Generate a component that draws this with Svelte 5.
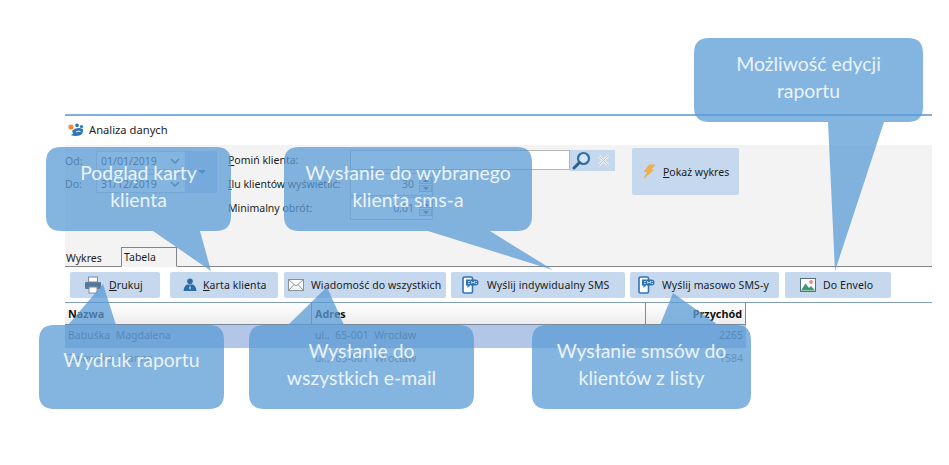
<script>
	const buttons = [
		{ id: 'print', key: 'D', rest: 'rukuj', width: 90, gap: 7, pad: 14, before: 0 },
		{ id: 'person', key: 'K', rest: 'arta klienta', width: 108, gap: 6, pad: 13, before: 10 },
		{ id: 'mail', key: '', rest: 'Wiadomość do wszystkich', width: 162, gap: 7, pad: 4, before: 6 },
		{ id: 'sms', key: '', rest: 'Wyślij indywidualny SMS', width: 174, gap: 8, pad: 11, before: 5 },
		{ id: 'sms', key: '', rest: 'Wyślij masowo SMS-y', width: 149, gap: 7, pad: 8, before: 5 },
		{ id: 'image', key: '', rest: 'Do Envelo', width: 106, gap: 7, pad: 15, before: 6 }
	];

	const rows = [
		{ name: 'Babuśka  Magdalena', addr: 'ul.,  65-001  Wrocław', sum: '2265', selected: true },
		{ name: 'Zalewska  Joanna', addr: 'ul.,  65-001  Wrocław', sum: '1584', selected: false }
	];

	// shape = rounded box + tail, drawn as one path so the overlap stays flat
	function bubble(x, y, w, h, t) {
		const r = 15;
		const base = t.top
			? `L${t.a} ${y} L${t.x} ${t.y} L${t.b} ${y} `
			: '';
		const foot = t.top
			? ''
			: `L${t.b} ${y + h} L${t.x} ${t.y} L${t.a} ${y + h} `;
		return (
			`M${x + r} ${y} ${base}L${x + w - r} ${y} Q${x + w} ${y} ${x + w} ${y + r} ` +
			`L${x + w} ${y + h - r} Q${x + w} ${y + h} ${x + w - r} ${y + h} ${foot}` +
			`L${x + r} ${y + h} Q${x} ${y + h} ${x} ${y + h - r} L${x} ${y + r} Q${x} ${y} ${x + r} ${y} Z`
		);
	}

	const callouts = [
		{ x: 46, y: 147, w: 185, h: 84, lines: ['Podgląd karty', 'klienta'], tail: { a: 153, b: 200, x: 211, y: 271 } },
		{ x: 284, y: 147, w: 248, h: 84, lines: ['Wysłanie do wybranego', 'klienta sms-a'], tail: { a: 428, b: 490, x: 553, y: 270 } },
		{ x: 694, y: 38, w: 229, h: 84, lines: ['Możliwość edycji', 'raportu'], tail: { a: 828, b: 884, x: 835, y: 271 } },
		{ x: 39, y: 325, w: 185, h: 84, lines: ['Wydruk raportu'], tail: { top: true, a: 68, b: 116, x: 103, y: 284 } },
		{ x: 249, y: 325, w: 225, h: 84, lines: ['Wysłanie do', 'wszystkich e-mail'], tail: { top: true, a: 288, b: 344, x: 327, y: 287 } },
		{ x: 532, y: 325, w: 219, h: 84, lines: ['Wysłanie smsów do', 'klientów z listy'], tail: { top: true, a: 660, b: 718, x: 673, y: 293 } }
	];
</script>

{#snippet icon(id)}
	{#if id === 'print'}
		<svg width="18" height="18" viewBox="0 0 18 18" aria-hidden="true">
			<rect x="4.5" y="1" width="9" height="5" fill="#fff" stroke="#7d8a96" />
			<rect x="1" y="6" width="16" height="7" rx="1" fill="#66798c" />
			<rect x="1" y="8" width="16" height="1.5" fill="#3f78ad" />
			<rect x="5" y="11" width="8" height="6" fill="#fff" stroke="#7d8a96" />
		</svg>
	{:else if id === 'person'}
		<svg width="14" height="14" viewBox="0 0 14 14" aria-hidden="true">
			<circle cx="7" cy="3.2" r="2.8" fill="#2a6ca8" />
			<path d="M4.4 6.4 L9.6 6.4 Q13 7.6 13.5 13 L0.5 13 Q1 7.6 4.4 6.4 Z" fill="#2a6ca8" />
			<path d="M7 7 L7.8 10 L7 12 L6.2 10 Z" fill="#cfe0f0" />
		</svg>
	{:else if id === 'mail'}
		<svg width="16" height="12" viewBox="0 0 16 12" aria-hidden="true">
			<rect x="0.5" y="0.5" width="15" height="11" fill="#fff" stroke="#8a8f95" />
			<path d="M1 1 L8 7 L15 1 M1 11 L6 5.5 M15 11 L10 5.5" fill="none" stroke="#8a8f95" />
		</svg>
	{:else if id === 'sms'}
		<svg width="17" height="18" viewBox="0 0 17 18" aria-hidden="true">
			<rect x="1" y="1" width="9.5" height="16" rx="1.5" fill="#fff" stroke="#2f74b5" stroke-width="1.6" />
			<path d="M4 3.5 H13.5 Q16.5 3.5 16.5 6.5 Q16.5 9.5 13.5 9.5 H8 L5.5 12 V9.5 H4 Z" fill="#2f74b5" />
			<path d="M6 5.5 H8 M6 7.5 H8 M9.5 7.5 V5.5 L11 7 L12.5 5.5 V7.5 M13.5 5.5 H15 M13.5 7.5 H15" stroke="#fff" stroke-width="0.7" fill="none" />
		</svg>
	{:else}
		<svg width="16" height="14" viewBox="0 0 16 14" aria-hidden="true">
			<rect x="0.5" y="0.5" width="15" height="13" fill="#fff" stroke="#55707f" />
			<circle cx="11" cy="4" r="2" fill="#ee8f7c" />
			<path d="M1 12.5 L5.5 5.5 L9 10 L11 8 L15 12.5 Z" fill="#3c9a6f" />
		</svg>
	{/if}
{/snippet}

{#snippet chevron()}
	<svg class="chev" width="10" height="6" viewBox="0 0 10 6" aria-hidden="true">
		<path d="M1 1 L5 5 L9 1" fill="none" stroke="#5f6a75" stroke-width="1.6" />
	</svg>
{/snippet}

{#snippet spin()}
	<span class="spin"><i class="up"></i><i class="down"></i></span>
{/snippet}

<main class="page">
	<div class="window">
		<header class="title">
			<svg width="16" height="14" viewBox="0 0 16 14" aria-hidden="true">
				<circle cx="3" cy="4" r="2.6" fill="#ef8a3c" />
				<circle cx="9" cy="2.4" r="1.8" fill="#2f74b5" />
				<circle cx="13.5" cy="3.6" r="1.6" fill="#2f74b5" />
				<path d="M4 8 Q8 3.5 15 6 Q15.5 11 11.5 12.5 Q7 13.5 2.5 12 Q6.5 11 4 8 Z" fill="#2f74b5" />
				<path d="M8 9 Q10 7.5 12.5 8.5" fill="none" stroke="#fff" />
			</svg>
			<span>Analiza danych</span>
		</header>

		<section class="panel">
			<div class="filters">
				<div class="dates">
					<div class="date-rows">
						<label class="date-row"><span>Od:</span><span class="date">01/01/2019{@render chevron()}</span></label>
						<label class="date-row"><span>Do:</span><span class="date">31/12/2019{@render chevron()}</span></label>
					</div>
					<span class="range-btn"><i class="caret"></i></span>
				</div>

				<div class="fields">
					<div class="field">
						<span class="lab"><u>P</u>omiń klienta:</span>
						<span class="text-input"></span>
						<span class="search">
							<svg width="19" height="19" viewBox="0 0 19 19" aria-hidden="true">
								<circle cx="11.5" cy="7.5" r="5.5" fill="#fff" fill-opacity="0.3" stroke="#2f6ea8" stroke-width="2.2" />
								<path d="M7.5 11.5 L2 17" stroke="#2f5f8f" stroke-width="3" stroke-linecap="round" />
							</svg>
							<svg width="13" height="13" viewBox="0 0 13 13" aria-hidden="true">
								<path d="M2 2 L11 11 M11 2 L2 11" stroke="#eef1f3" stroke-width="2.6" />
								<path d="M2 2 L11 11 M11 2 L2 11" stroke="#aab4bc" stroke-width="0.8" />
							</svg>
						</span>
					</div>
					<div class="field">
						<span class="lab"><u>I</u>lu klientów wyświetlić:</span>
						<span class="num">30{@render spin()}</span>
					</div>
					<div class="field">
						<span class="lab">Minimalny obrót:</span>
						<span class="num">0,01{@render spin()}</span>
					</div>
				</div>

				<div class="show">
					<svg width="14" height="16" viewBox="0 0 14 16" aria-hidden="true">
						<path d="M7 0.5 H13.5 L9.5 5.5 H12.5 L1 15.5 L5 8 H1.5 Z" fill="#eeb04d" />
					</svg>
					<span><u>P</u>okaż wykres</span>
				</div>
			</div>

			<div class="tabs">
				<span class="tab">Wykres</span>
				<span class="tab active">Tabela</span>
			</div>
		</section>

		<nav class="toolbar">
			{#each buttons as b}
				<div class="tool" style="width: {b.width}px; gap: {b.gap}px; padding-left: {b.pad}px; margin-left: {b.before}px">
					{@render icon(b.id)}
					<span>{#if b.key}<u>{b.key}</u>{/if}{b.rest}</span>
				</div>
			{/each}
		</nav>

		<div class="table">
			<div class="row head">
				<span>Nazwa</span>
				<span>Adres</span>
				<span class="sum">Przychód</span>
			</div>
			{#each rows as r}
				<div class="row" class:selected={r.selected}>
					<span>{r.name}</span>
					<span>{r.addr}</span>
					<span class="sum">{r.sum}</span>
				</div>
			{/each}
		</div>
	</div>

	<svg class="shapes" width="949" height="465" aria-hidden="true">
		{#each callouts as c}
			<path d={bubble(c.x, c.y, c.w, c.h, c.tail)} />
		{/each}
	</svg>
	{#each callouts as c}
		<div class="callout" class:single={c.lines.length === 1} style="left: {c.x}px; top: {c.y}px; width: {c.w}px; height: {c.h}px">
			{#each c.lines as line}
				<span>{line}</span>
			{/each}
		</div>
	{/each}
</main>

<style>
	:global(body) {
		margin: 0;
		background: #fff;
	}

	.page {
		position: relative;
		width: 949px;
		height: 465px;
		overflow: hidden;
		font-family: 'Noto Sans', 'Open Sans', sans-serif;
		font-size: 10.5px;
		color: #1c1c1c;
	}

	.window {
		position: absolute;
		left: 65px;
		top: 114px;
		width: 867px;
		border-top: 2px solid #7fb0de;
	}

	.title {
		display: flex;
		align-items: center;
		gap: 5px;
		box-sizing: border-box;
		height: 29px;
		padding: 0 0 2px 3px;
		font-size: 11.2px;
	}

	.panel {
		display: flex;
		flex-direction: column;
		height: 122px;
		background: #f3f3f3;
		border-bottom: 1px solid #858585;
		box-sizing: border-box;
	}

	.filters {
		display: flex;
		flex: 1;
		padding-top: 3px;
	}

	.dates {
		display: flex;
		width: 164px;
		padding-top: 3px;
	}

	.date-rows {
		display: flex;
		flex-direction: column;
		gap: 4px;
	}

	.date-row {
		display: flex;
		align-items: center;
		width: 121px;
		height: 19px;
		color: #333;
	}

	.date-row > span:first-child {
		width: 31px;
	}

	.date {
		display: flex;
		align-items: center;
		justify-content: space-between;
		box-sizing: border-box;
		width: 90px;
		height: 19px;
		padding: 0 5px 0 4px;
		background: #fff;
		border: 1px solid #c9c9c9;
		color: #333;
	}

	.range-btn {
		display: flex;
		align-items: center;
		justify-content: center;
		width: 31px;
		height: 42px;
		background: #c5d8ee;
	}

	.caret {
		width: 0;
		height: 0;
		border: 4px solid transparent;
		border-top: 4px solid #3a6ea5;
		border-bottom: 0;
	}

	.fields {
		display: flex;
		flex-direction: column;
		width: 403px;
	}

	.field {
		display: flex;
		align-items: center;
		height: 24px;
	}

	.lab {
		width: 121px;
		white-space: nowrap;
		margin-left: -1px;
		margin-right: 1px;
	}

	.text-input {
		box-sizing: border-box;
		width: 220px;
		height: 20px;
		background: #fff;
		border: 1px solid #b5b5b5;
	}

	.search {
		display: flex;
		align-items: center;
		gap: 6px;
		box-sizing: border-box;
		width: 45px;
		height: 21px;
		padding-left: 2px;
		background: #c5d8ee;
	}

	.num {
		display: flex;
		align-items: center;
		justify-content: flex-end;
		gap: 5px;
		box-sizing: border-box;
		width: 83px;
		height: 23px;
		background: #fff;
		border: 1px solid #bdbdbd;
		color: #444;
	}

	.spin {
		display: flex;
		flex-direction: column;
		gap: 1px;
		width: 13px;
	}

	.spin i {
		display: flex;
		align-items: center;
		justify-content: center;
		height: 7px;
		background: #dfe6ee;
		border: 1px solid #aab4be;
		box-sizing: border-box;
	}

	.spin i::before {
		content: '';
		border: 3px solid transparent;
		border-top: 3px solid #4a5560;
		border-bottom: 0;
	}

	.spin .up::before {
		border-top: 0;
		border-bottom: 3px solid #4a5560;
	}

	.show {
		display: flex;
		align-items: center;
		gap: 7px;
		box-sizing: border-box;
		width: 107px;
		height: 47px;
		padding-left: 10px;
		background: #c5d8ee;
		border-radius: 2px;
	}

	.tabs {
		display: flex;
		align-items: flex-end;
		height: 19px;
		margin-bottom: -1px;
	}

	.tab {
		display: flex;
		align-items: center;
		height: 18px;
		padding: 0 3px 0 1px;
		width: 52px;
		font-size: 10.5px;
		box-sizing: border-box;
	}

	.tab.active {
		width: 56px;
		height: 20px;
		padding-left: 2px;
		background: #f3f3f3;
		border: 1px solid #858585;
		border-bottom: 1px solid #f3f3f3;
		margin-left: 4px;
	}

	.toolbar {
		display: flex;
		align-items: center;
		height: 36px;
		padding: 1px 0 0 5px;
		border-bottom: 1px solid #7f9db9;
		box-sizing: border-box;
	}

	.tool {
		display: flex;
		align-items: center;
		box-sizing: border-box;
		height: 26px;
		background: #c5d8ee;
		border-radius: 2px;
		white-space: nowrap;
		letter-spacing: 0.1px;
	}

	.table {
		width: 681px;
	}

	.row {
		display: grid;
		grid-template-columns: 247px 334px 100px;
		box-sizing: border-box;
		height: 23px;
		padding-bottom: 3px;
		align-items: center;
		color: #777;
	}

	.row > span {
		padding-left: 3px;
		white-space: pre;
	}

	.row .sum {
		padding: 0 3px 0 0;
		text-align: right;
	}

	.row.head {
		box-sizing: content-box;
		height: 21px;
		padding-bottom: 0;
		background: linear-gradient(#ffffff, #ececec);
		border-bottom: 1px solid #7a8a99;
		font-size: 10.8px;
		font-weight: 700;
		color: #111;
	}

	.row.head > span {
		display: flex;
		align-items: center;
		height: 100%;
		box-sizing: border-box;
		padding-bottom: 1px;
		border-right: 1px solid #8a8a8a;
	}

	.row.head .sum {
		justify-content: flex-end;
	}

	.row.selected {
		background: #b2c6e8;
		color: #555;
	}

	.shapes {
		position: absolute;
		left: 0;
		top: 0;
	}

	.shapes path {
		fill: rgba(91, 155, 213, 0.75);
	}

	.callout {
		position: absolute;
		display: flex;
		flex-direction: column;
		align-items: center;
		justify-content: center;
		box-sizing: border-box;
		padding-bottom: 7px;
		font-family: Lato, 'Open Sans', sans-serif;
		font-size: 19.4px;
		line-height: 27px;
		color: #eaf3fb;
		white-space: nowrap;
	}

	.callout.single {
		padding-bottom: 16px;
	}
</style>
